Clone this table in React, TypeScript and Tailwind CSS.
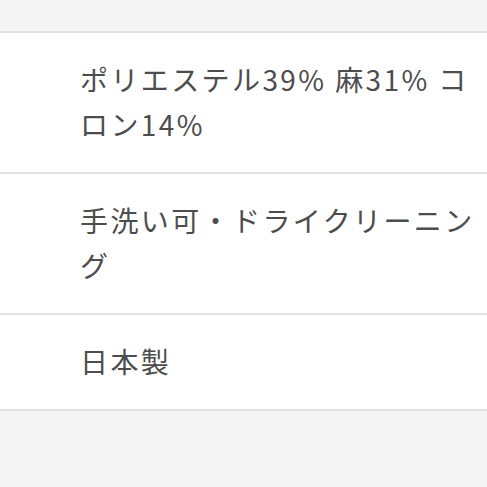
const rows = [
  "ポリエステル39% 麻31% コロン14%",
  "手洗い可・ドライクリーニング",
  "日本製",
];

export default function App() {
  return (
    <div
      className="min-h-[487px] bg-[#f4f4f4] pt-[31px]"
      style={{ fontFamily: '"Noto Sans CJK JP", "Noto Sans", sans-serif' }}
    >
      <div className="bg-white border-t-2 border-[#e2e2e2]">
        {rows.map((text) => (
          <div key={text} className="border-b-2 border-[#e2e2e2] pl-[80px] pr-[6px] pt-[24px] pb-[25px]">
            <p className="text-[28px] leading-[45px] tracking-[2.4px] text-[#4d4d4d]">{text}</p>
          </div>
        ))}
      </div>
    </div>
  );
}
